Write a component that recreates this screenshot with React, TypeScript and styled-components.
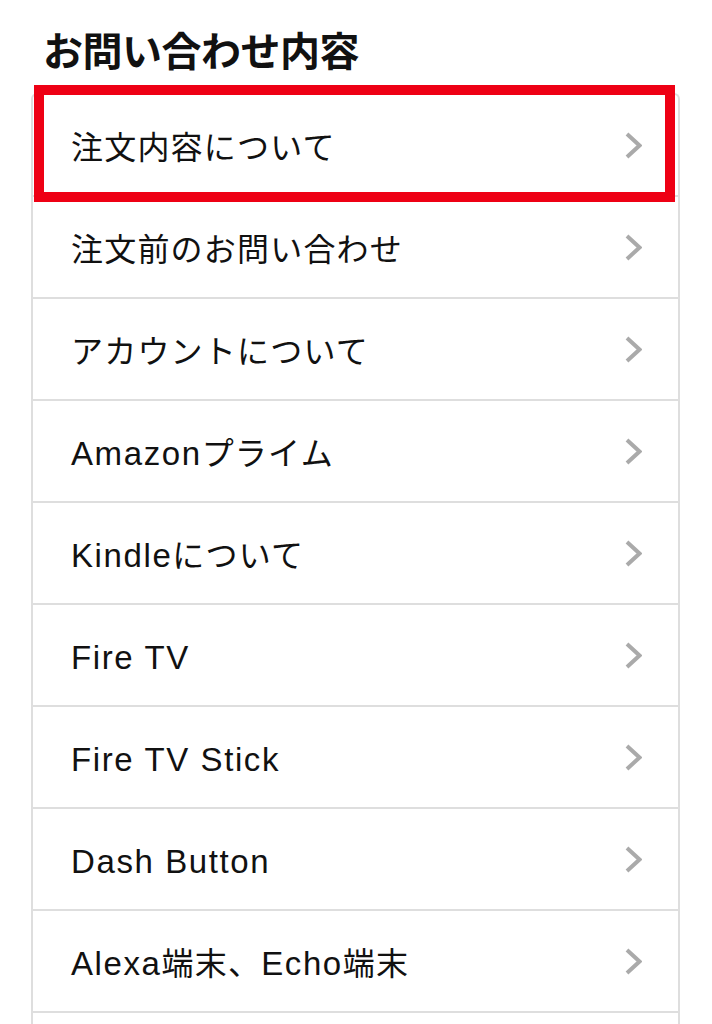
import styled, { createGlobalStyle } from "styled-components";

const GlobalStyle = createGlobalStyle`
  html, body {
    margin: 0;
    padding: 0;
    overflow: hidden;
    background: #ffffff;
  }
  body {
    font-family: "Liberation Sans", "Noto Sans CJK JP", sans-serif;
    color: #111111;
  }
`;

const Page = styled.div`
  width: 712px;
  padding: 0 32px 0 31px;
  box-sizing: border-box;
`;

const Title = styled.h2`
  margin: 0 0 23px 0;
  padding: 28px 0 0 12px;
  font-family: "Noto Sans CJK JP", sans-serif;
  font-size: 40px;
  line-height: 42px;
  font-weight: 700;
  letter-spacing: -0.5px;
  color: #111111;
`;

const List = styled.ul`
  list-style: none;
  margin: 0;
  padding: 0;
  border: 2px solid #dedede;
  border-bottom: none;
  border-radius: 6px 6px 0 0;
`;

const Row = styled.li<{ $marked?: boolean }>`
  position: relative;
  display: flex;
  align-items: center;
  justify-content: space-between;
  height: 100px;
  padding: 0 36px 0 38px;
  border-bottom: 2px solid #dedede;

  ${({ $marked }) =>
    $marked &&
    `
    &::after {
      content: "";
      position: absolute;
      top: -10px;
      left: 1px;
      right: 3px;
      bottom: -7px;
      border: 10px solid #ee0014;
      pointer-events: none;
    }
  `}
`;

const Label = styled.span`
  font-family: "Noto Sans CJK JP", sans-serif;
  font-size: 32px;
  letter-spacing: 1.2px;
  font-weight: 400;
  color: #111111;
`;

const Latin = styled.span`
  font-family: "Liberation Sans", sans-serif;
  font-size: 33px;
  letter-spacing: 1.6px;
`;

const Chevron = () => (
  <svg width="17" height="27" viewBox="0 0 17 27" aria-hidden="true">
    <polyline
      points="2,2 14.5,13.5 2,25"
      fill="none"
      stroke="#aaaaaa"
      strokeWidth="4"
      strokeLinejoin="miter"
    />
  </svg>
);

// split a label into latin / japanese runs so each gets its own metrics
const renderLabel = (text: string) =>
  text.split(/([A-Za-z ]+)/).filter(Boolean).map((part, i) =>
    /^[A-Za-z ]+$/.test(part) ? <Latin key={i}>{part}</Latin> : <span key={i}>{part}</span>
  );

const items = [
  "注文内容について",
  "注文前のお問い合わせ",
  "アカウントについて",
  "Amazonプライム",
  "Kindleについて",
  "Fire TV",
  "Fire TV Stick",
  "Dash Button",
  "Alexa端末、Echo端末",
  "",
];

export default function App() {
  return (
    <>
      <GlobalStyle />
      <Page>
        <Title>お問い合わせ内容</Title>
        <List>
          {items.map((item, i) => (
            <Row key={i} $marked={i === 0}>
              <Label>{renderLabel(item)}</Label>
              {item && <Chevron />}
            </Row>
          ))}
        </List>
      </Page>
    </>
  );
}
